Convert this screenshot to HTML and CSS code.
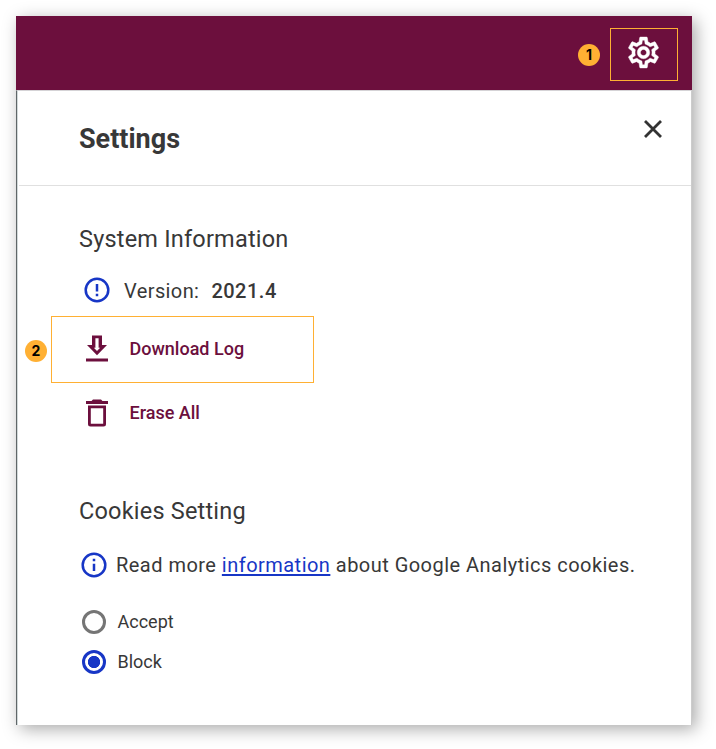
FILE: index.html
```html
<!DOCTYPE html>
<html lang="en">
<head>
<meta charset="utf-8">
<title>Settings</title>
<link rel="stylesheet" href="styles.css">
</head>
<body>
<div class="window">
  <header class="topbar">
    <span class="marker">1</span>
    <button class="gear" aria-label="Settings">
      <svg width="37" height="37" viewBox="0 0 24 24" fill="#fff" stroke="#fff" stroke-width=".3"><path d="M19.43 12.98c.04-.32.07-.64.07-.98 0-.34-.03-.66-.07-.98l2.11-1.65c.19-.15.24-.42.12-.64l-2-3.46c-.09-.16-.26-.25-.44-.25-.06 0-.12.01-.17.03l-2.49 1c-.52-.4-1.08-.73-1.69-.98l-.38-2.65C14.46 2.18 14.25 2 14 2h-4c-.25 0-.46.18-.49.42l-.38 2.65c-.61.25-1.17.59-1.69.98l-2.49-1c-.06-.02-.12-.03-.18-.03-.17 0-.34.09-.43.25l-2 3.46c-.13.22-.07.49.12.64l2.11 1.65c-.04.32-.07.65-.07.98 0 .33.03.66.07.98l-2.11 1.65c-.19.15-.24.42-.12.64l2 3.46c.09.16.26.25.44.25.06 0 .12-.01.17-.03l2.49-1c.52.4 1.08.73 1.69.98l.38 2.65c.03.24.24.42.49.42h4c.25 0 .46-.18.49-.42l.38-2.65c.61-.25 1.17-.59 1.69-.98l2.49 1c.06.02.12.03.18.03.17 0 .34-.09.43-.25l2-3.46c.12-.22.07-.49-.12-.64l-2.11-1.65zm-1.98-1.71c.04.31.05.52.05.73 0 .21-.02.43-.05.73l-.14 1.13.89.7 1.08.84-.7 1.21-1.27-.51-1.04-.42-.9.68c-.43.32-.84.56-1.25.73l-1.06.43-.16 1.13-.2 1.35h-1.4l-.19-1.35-.16-1.13-1.06-.43c-.43-.18-.83-.41-1.23-.71l-.91-.7-1.06.43-1.27.51-.7-1.21 1.08-.84.89-.7-.14-1.13c-.03-.31-.05-.54-.05-.74s.02-.43.05-.73l.14-1.13-.89-.7-1.08-.84.7-1.21 1.27.51 1.04.42.9-.68c.43-.32.84-.56 1.25-.73l1.06-.43.16-1.13.2-1.35h1.39l.19 1.35.16 1.13 1.06.43c.43.18.83.41 1.23.71l.91.7 1.06-.43 1.27-.51.7 1.21-1.07.85-.89.7.14 1.13zM12 8c-2.21 0-4 1.79-4 4s1.79 4 4 4 4-1.79 4-4-1.79-4-4-4zm0 6c-1.1 0-2-.9-2-2s.9-2 2-2 2 .9 2 2-.9 2-2 2z"/></svg>
    </button>
  </header>
  <main class="panel">
    <div class="panel-head">
      <h1>Settings</h1>
      <button class="close" aria-label="Close">
        <svg width="18" height="18" viewBox="0 0 18 18" fill="none" stroke="#333" stroke-width="2.8"><path d="M1 1l16 16M17 1L1 17"/></svg>
      </button>
    </div>
    <section class="system">
      <h2>System Information</h2>
      <div class="version">
        <svg width="26" height="26" viewBox="0 0 26 26" fill="none" stroke="#1736c6" stroke-width="2.5"><circle cx="13" cy="13" r="11.3"/><path d="M13 7v7.5M13 16.800v2.4"/></svg>
        <span class="label">Version:</span><strong>2021.4</strong>
      </div>
      <div class="download">
        <span class="marker">2</span>
        <button class="action boxed">
          <svg width="22" height="28" viewBox="0 0 22 28" fill="#6c0f3d"><path fill-rule="evenodd" d="M6 .5h10v9.500h5L11 20.200 1 10h5zM9.400 3.300v9.500H7.800l3.200 3.300 3.200-3.300h-1.600V3.300z"/><path d="M0 23.500h22v3H0z"/></svg>
          <span class="text">Download Log</span>
        </button>
      </div>
      <button class="action">
        <svg width="22" height="28" viewBox="0 0 22 28" fill="#6c0f3d"><path d="M0 2h5.5L7 .5h8L16.500 2H22v3H0z"/><path fill-rule="evenodd" d="M2 6.500h18V25a2.500 2.500 0 0 1-2.500 2.500h-13A2.500 2.500 0 0 1 2 25zM4.800 9.200v15.600h12.400V9.200z"/></svg>
        <span class="text erase">Erase All</span>
      </button>
    </section>
    <section class="cookies">
      <h2>Cookies Setting</h2>
      <p class="notice">
        <svg width="26" height="26" viewBox="0 0 26 26" fill="none" stroke="#1736c6" stroke-width="2.5"><circle cx="13" cy="13" r="11.300"/><path d="M13 6.800v2.400M13 11.700v7.300"/></svg>
        <span>Read more <a href="#">information</a> about Google Analytics cookies.</span>
      </p>
      <label class="option"><span class="radio"></span><span class="choice">Accept</span></label>
      <label class="option"><span class="radio checked"></span><span class="choice">Block</span></label>
    </section>
  </main>
</div>
</body>
</html>
```
FILE: styles.css
```css
* { box-sizing: border-box; }
body {
  margin: 0;
  padding: 16px 24px 24px 16px;
  background: #fff;
  color: #383838;
  font-family: Roboto, "Liberation Sans", sans-serif;
}
h1, h2, p { margin: 0; }
svg { display: block; flex: none; }
button { background: none; border: 0; padding: 0; font: inherit; color: inherit; }
.window {
  width: 676px;
  height: 709px;
  background: #fff;
  box-shadow: 4px 4px 16px rgba(0, 0, 0, .34);
}
.topbar {
  height: 74px;
  padding: 12px 14px 0 0;
  display: flex;
  justify-content: flex-end;
  background: #6c0f3d;
}
.marker {
  width: 22px;
  height: 22px;
  border-radius: 50%;
  background: #ffb033;
  color: #000;
  font: bold 14px/22px Inter, sans-serif;
  text-align: center;
  flex: none;
}
.topbar .marker { margin: 16px 10px 0 0; }
.gear {
  width: 68px;
  height: 53px;
  padding: 0 0 4px 14px;
  border: 1px solid #ffb033;
}
.panel {
  height: 635px;
  border-top: 1px solid #d5d3d6;
  border-left: 1px solid #606668;
  border-right: 1px solid #ccc;
  box-shadow: inset 1px 0 #d2dada;
}
.panel-head {
  height: 95px;
  margin-left: 2px;
  padding: 30px 29px 0 60px;
  border-bottom: 1px solid #e0e0e0;
  display: flex;
  justify-content: space-between;
}
h1 { font-size: 27px; line-height: 36px; font-weight: 700; }
.close { height: 18px; width: 18px; margin-top: -1px; }
.system { padding: 37px 0 0 62px; }
h2 { font-size: 23.5px; line-height: 32px; font-weight: 400; letter-spacing: .2px; }
.version { display: flex; align-items: center; height: 26px; margin: 22px 0 0 5px; font-size: 20px; }
.version .label { margin-left: 14px; padding-top: 2px; letter-spacing: .4px; }
.version strong { margin-left: 12px; padding-top: 2px; font-weight: 500; letter-spacing: .5px; }
.download { display: flex; align-items: center; height: 67px; margin: 13px 0 0 -54px; gap: 4px; }
.download .marker { margin-top: 3px; }
.action { display: flex; align-items: center; color: #6c0f3d; font-weight: 500; font-size: 18px; }
.action .text { margin-left: 21.5px; }
.action .erase { padding-bottom: 2px; }
.boxed { width: 263px; height: 67px; padding: 0 0 2px 34px; border: 1px solid #ffb033; }
.system > .action { height: 28px; margin: 16px 0 0 7px; }
.cookies { padding: 68px 0 0 62px; }
.notice { display: flex; align-items: center; height: 26px; margin: 25px 0 0 2px; font-size: 20px; white-space: nowrap; letter-spacing: .47px; }
.notice span { margin-left: 9px; }
a {
  color: #1736c6;
  text-decoration: underline 2px;
  text-underline-offset: 2px;
  text-decoration-skip-ink: none;
}
.option { display: flex; align-items: center; height: 24px; margin: 16px 0 0 3px; font-size: 18px; }
.notice + .option { margin-top: 32px; }
.choice { padding-bottom: 2px; }
.radio { width: 24px; height: 24px; margin-right: 11.5px; border: 3px solid #757575; border-radius: 50%; }
.radio.checked { border-color: #1736c6; background: radial-gradient(circle, #1736c6 5.800px, transparent 6.500px); }
```
